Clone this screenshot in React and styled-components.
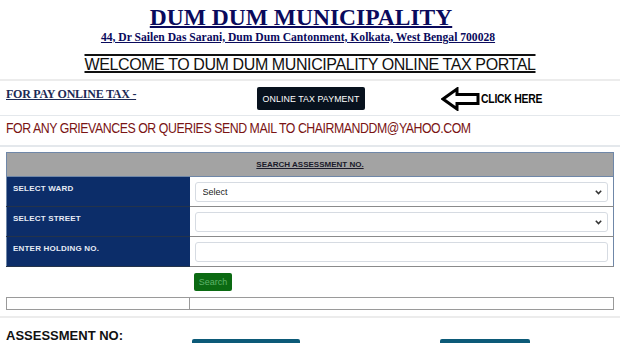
import React from 'react'
import styled, { createGlobalStyle } from 'styled-components'

const GlobalStyle = createGlobalStyle`
  body {
    margin: 0;
    background: #fff;
    font-family: "Liberation Sans", Arial, sans-serif;
  }
`

function ArrowIcon() {
  return (
    <svg width="40" height="24" viewBox="0 0 40 24">
      <path
        d="M2 12 L16 2 L16 7.5 L37 7.5 L37 16.5 L16 16.5 L16 22 Z"
        fill="#fff"
        stroke="#000"
        strokeWidth="3"
        strokeLinejoin="miter"
      />
    </svg>
  )
}

function Chevron() {
  return (
    <svg width="7" height="5" viewBox="0 0 7 5">
      <path d="M0.8 0.8 L3.5 3.6 L6.2 0.8" fill="none" stroke="#333" strokeWidth="1.5" />
    </svg>
  )
}

const rows = [
  { label: 'SELECT WARD', kind: 'select', value: 'Select' },
  { label: 'SELECT STREET', kind: 'select', value: '' },
  { label: 'ENTER HOLDING NO.', kind: 'input' },
]

export default function App() {
  return (
    <Page>
      <GlobalStyle />
      <Header>
        <Title>DUM DUM MUNICIPALITY</Title>
        <Address>44, Dr Sailen Das Sarani, Dum Dum Cantonment, Kolkata, West Bengal 700028</Address>
        <Welcome>WELCOME TO DUM DUM MUNICIPALITY ONLINE TAX PORTAL</Welcome>
      </Header>

      <PayRow>
        <PayLabel>FOR PAY ONLINE TAX -</PayLabel>
        <PayCell>
          <DarkButton>ONLINE TAX PAYMENT</DarkButton>
        </PayCell>
        <ClickCell>
          <ArrowIcon />
          <ClickText>CLICK HERE</ClickText>
        </ClickCell>
      </PayRow>

      <MailRow>
        <MailText>FOR ANY GRIEVANCES OR QUERIES SEND MAIL TO CHAIRMANDDM@YAHOO.COM</MailText>
      </MailRow>

      <Section>
        <Table>
          <thead>
            <tr>
              <HeadCell colSpan={2}>SEARCH ASSESSMENT NO.</HeadCell>
            </tr>
          </thead>
          <tbody>
            {rows.map((r) => (
              <tr key={r.label}>
                <LabelCell>{r.label}</LabelCell>
                <FieldCell>
                  {r.kind === 'select' ? (
                    <SelectWrap>
                      <Select defaultValue={r.value}>
                        <option value={r.value}>{r.value}</option>
                      </Select>
                      <ChevronSlot>
                        <Chevron />
                      </ChevronSlot>
                    </SelectWrap>
                  ) : (
                    <TextInput type="text" />
                  )}
                </FieldCell>
              </tr>
            ))}
          </tbody>
        </Table>
        <ButtonRow>
          <SearchButton>Search</SearchButton>
        </ButtonRow>
        <EmptyTable>
          <tbody>
            <tr>
              <EmptyCell $w="183px" />
              <EmptyCell />
            </tr>
          </tbody>
        </EmptyTable>
      </Section>

      <ResultRow>
        <ResultLabel>ASSESSMENT NO:</ResultLabel>
        <TealButton $left="84px" $w="108px" />
        <TealButton $left="140px" $w="90px" />
      </ResultRow>
    </Page>
  )
}

const Page = styled.div`
  width: 620px;
  height: 343px;
  overflow: hidden;
`

const Header = styled.div`
  display: flex;
  flex-direction: column;
  align-items: center;
  padding-top: 4px;
  height: 81px;
  box-sizing: border-box;
  border-bottom: 2px solid #ececec;
`

const Title = styled.div`
  font-family: "Liberation Serif", "Times New Roman", serif;
  font-weight: bold;
  font-size: 23.5px;
  line-height: 26px;
  color: #0a0a5c;
  text-decoration: underline;
  text-decoration-thickness: 2px;
  text-underline-offset: 1px;
  margin-right: 18px;
`

const Address = styled.div`
  font-family: "Liberation Serif", "Times New Roman", serif;
  font-weight: bold;
  font-size: 11.6px;
  line-height: 15px;
  color: #0a0a5c;
  text-decoration: underline;
  margin-right: 24px;
`

const Welcome = styled.div`
  margin-top: 10px;
  font-size: 16px;
  line-height: 20px;
  letter-spacing: -0.4px;
  color: #111;
  text-decoration: underline overline;
  text-decoration-thickness: 2px;
`

const PayRow = styled.div`
  display: grid;
  grid-template-columns: 206px 208px 1fr;
  align-items: center;
  height: 35px;
  box-sizing: border-box;
  padding: 1px 6px 0;
  border-bottom: 1px solid #e4e8ec;
`

const PayLabel = styled.div`
  font-family: "Liberation Serif", "Times New Roman", serif;
  font-weight: bold;
  font-size: 12px;
  letter-spacing: -0.25px;
  color: #1c2a55;
  text-decoration: underline;
  align-self: start;
  margin-top: 5px;
`

const PayCell = styled.div`
  display: flex;
  justify-content: center;
`

const DarkButton = styled.div`
  background: #08121e;
  color: #fff;
  font-size: 8.8px;
  letter-spacing: 0.1px;
  padding: 0 6px;
  height: 23px;
  display: flex;
  align-items: center;
  border-radius: 2px;
  margin-left: -10px;
`

const ClickCell = styled.div`
  display: flex;
  align-items: center;
  padding-left: 21px;
`

const ClickText = styled.span`
  display: inline-block;
  font-weight: bold;
  font-size: 13px;
  letter-spacing: -0.3px;
  color: #000;
  transform: scaleX(0.8);
  transform-origin: left center;
`

const MailRow = styled.div`
  height: 31px;
  padding: 3px 6px 0;
  box-sizing: border-box;
  border-bottom: 2px solid #e4e8ec;
`

const MailText = styled.span`
  display: inline-block;
  white-space: nowrap;
  font-size: 14px;
  letter-spacing: -0.5px;
  color: #7a1414;
  transform: scaleX(0.88);
  transform-origin: left center;
`

const Section = styled.div`
  padding: 5px 6px 6px;
  border-bottom: 2px solid #ececec;
`

const Table = styled.table`
  width: 100%;
  border-collapse: collapse;
  border: 1px solid #6f87a8;
`

const HeadCell = styled.th`
  height: 24px;
  box-sizing: border-box;
  background: #a3a3a3;
  font-size: 8px;
  font-weight: bold;
  color: #1a1a2a;
  text-decoration: underline;
  text-align: center;
  padding: 0;
  border-bottom: 1px solid #6f87a8;
`

const LabelCell = styled.td`
  width: 183px;
  height: 30px;
  box-sizing: border-box;
  background: #0c2d69;
  color: #e6ebf5;
  font-size: 8px;
  font-weight: bold;
  letter-spacing: 0.2px;
  vertical-align: top;
  padding: 7px 6px 0;
  border-bottom: 1px solid #24334a;
`

const FieldCell = styled.td`
  height: 30px;
  box-sizing: border-box;
  padding: 0 5px;
  border-bottom: 1px solid #8a8a8a;
`

const fieldBase = `
  display: block;
  width: 100%;
  height: 20px;
  box-sizing: border-box;
  border: 1px solid #d6dbe2;
  border-radius: 3px;
  background: #fff;
  font-family: "Liberation Sans", Arial, sans-serif;
  font-size: 9px;
  color: #222;
  margin: 0;
`

const SelectWrap = styled.div`
  position: relative;
`

const Select = styled.select`
  ${fieldBase}
  appearance: none;
  padding: 0 7px;
`

const ChevronSlot = styled.span`
  position: absolute;
  right: 6px;
  top: 8px;
  line-height: 0;
  pointer-events: none;
`

const TextInput = styled.input`
  ${fieldBase}
  padding: 0 6px;
`

const ButtonRow = styled.div`
  padding: 6px 0 6px 188px;
  line-height: 0;
`

const SearchButton = styled.button`
  background: #0b6a12;
  color: #5fb36a;
  font-family: "Liberation Sans", Arial, sans-serif;
  font-size: 9px;
  height: 18px;
  width: 38px;
  padding: 0;
  border: none;
  border-radius: 2px;
`

const EmptyTable = styled.table`
  width: 100%;
  border-collapse: collapse;
`

const EmptyCell = styled.td`
  width: ${(p) => p.$w || 'auto'};
  height: 12px;
  box-sizing: border-box;
  padding: 0;
  border: 1px solid #9a9a9a;
`

const ResultRow = styled.div`
  display: flex;
  align-items: flex-start;
  padding: 10px 6px 0;
`

const ResultLabel = styled.div`
  font-size: 13px;
  line-height: 15px;
  font-weight: bold;
  color: #111;
  width: 102px;
  white-space: nowrap;
`

const TealButton = styled.div`
  margin-left: ${(p) => p.$left};
  margin-top: 11px;
  width: ${(p) => p.$w};
  height: 20px;
  background: #0c5a78;
  border-radius: 2px;
`
